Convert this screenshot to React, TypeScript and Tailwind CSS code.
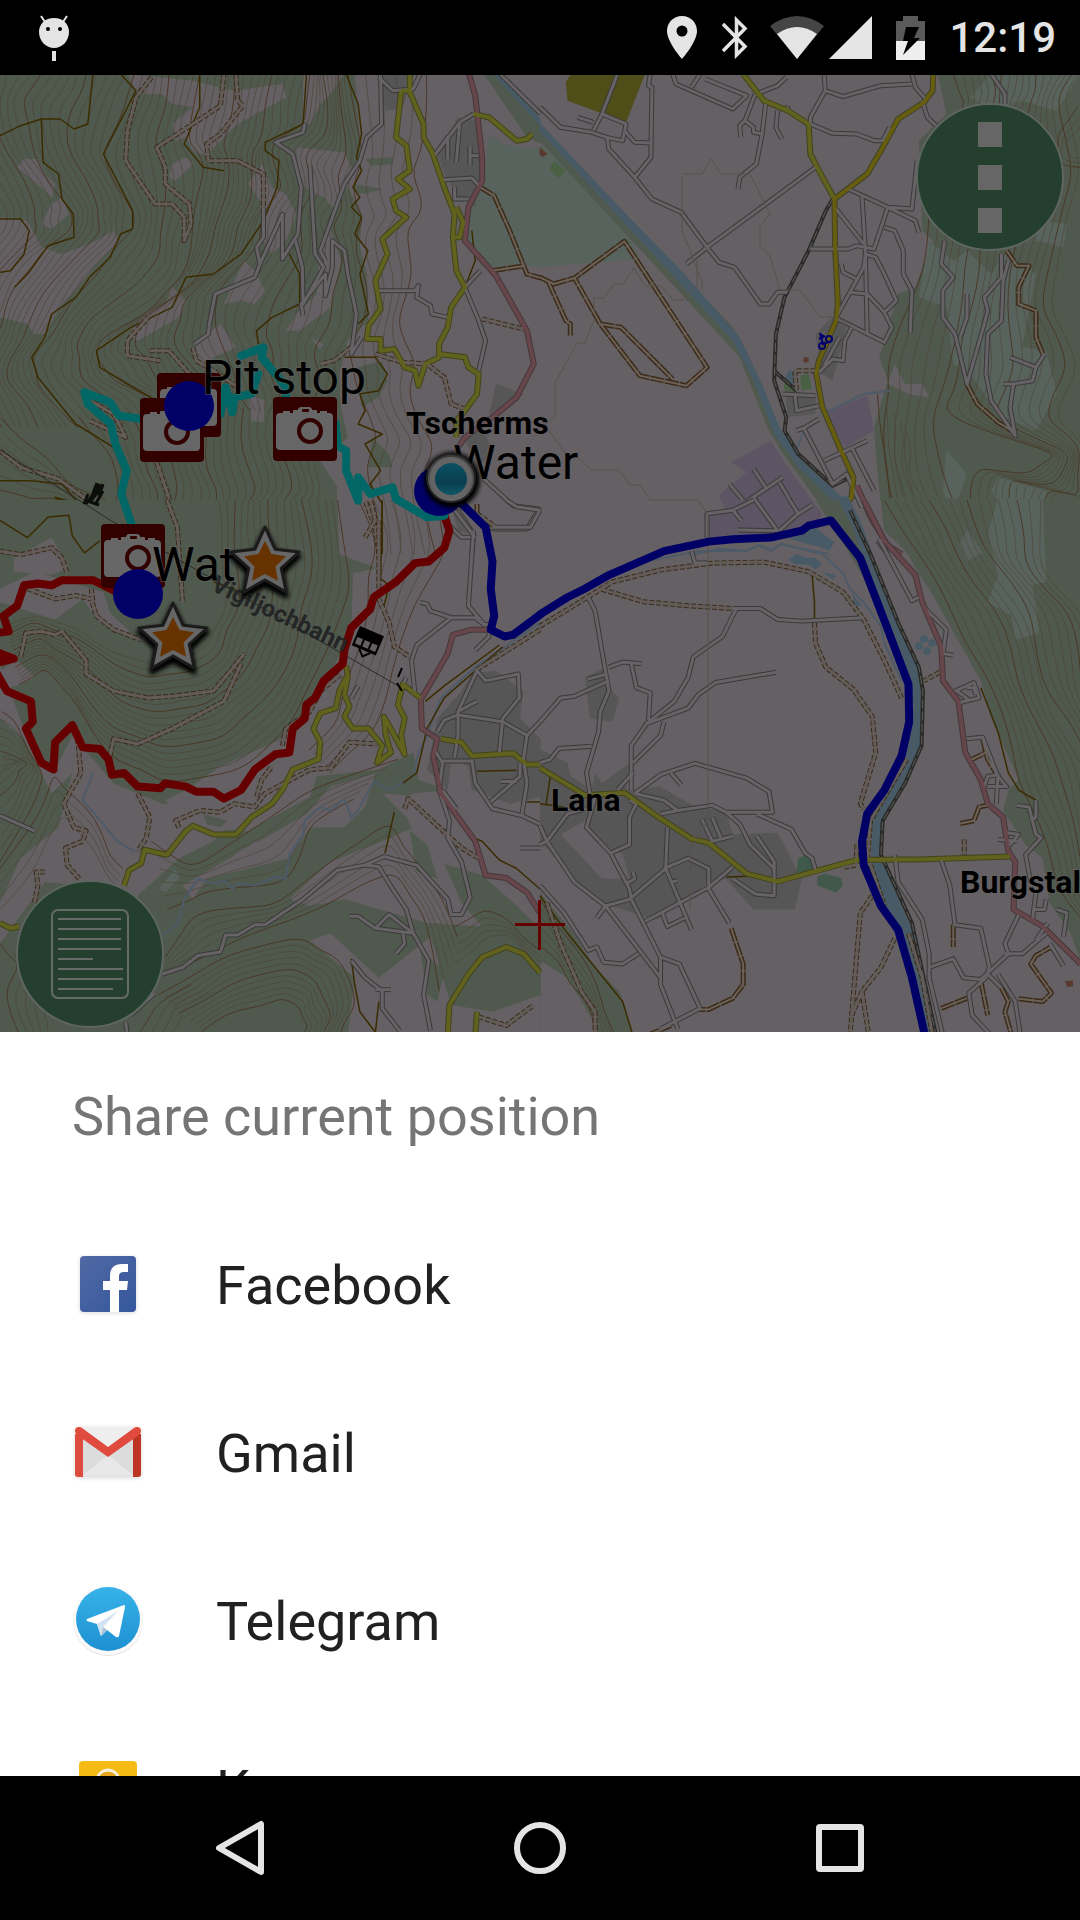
import React from "react";

type Kind = "minor" | "yellow" | "gold" | "red" | "track" | "path" | "water" | "rail" | "brown";

type Sheet = {
  transform: string;
  areas: [string, string][];
  contours: [string, string, number][];
  lines: Partial<Record<Kind, string[]>>;
};

const LAND = "#656064";
const WOOD = "#50594d";
const HEATH = "#59635d";
const TOWN = "#575656";
const TRADE = "#5d5464";
const LAKE = "#495a67";

const casing: Record<Kind, [string, number, string?]> = {
  minor: ["#393a39", 5],
  yellow: ["#42431c", 6],
  gold: ["#40402a", 6],
  red: ["#45373a", 6],
  track: ["#3b2c19", 5, "5 2"],
  path: ["#3b2c00", 1.5],
  water: ["#4d5a68", 2],
  rail: ["#2a2b28", 4],
  brown: ["#3d2b17", 5, "14 1"],
};
const core: Partial<Record<Kind, [string, number, string?]>> = {
  minor: ["#666266", 3],
  yellow: ["#62621f", 4],
  gold: ["#665e0e", 4],
  red: ["#66464b", 4],
  track: ["#625b58", 3],
  rail: ["#5d5c5a", 1, "9 3"],
  brown: ["#6a6159", 2],
};

const northWest: Sheet = {
  transform: "translate(0 74) scale(0.34439 0.33333)",
  areas: [
    [WOOD, "0,0 1030,0 1048,240 1005,330 1050,420 1045,520 1065,600 1070,740 1010,800 985,900 990,1000 1010,1090 930,1160 980,1240 975,1330 970,1445 0,1445"],
    [LAND, "0,430 80,440 120,520 180,540 260,510 330,470 345,500 280,570 240,620 180,690 130,780 100,780 80,750 0,730"],
    [LAND, "50,280 70,255 110,255 130,300 160,330 150,370 125,345"],
    [LAND, "120,450 150,390 180,370 200,420 150,465"],
    [LAND, "370,0 560,20 680,50 820,30 832,70 760,110 690,150 640,200 600,245 560,230 540,190 510,200 500,150 560,100 500,90 470,60 400,60"],
    [LAND, "490,310 500,270 540,250 560,270 510,320"],
    [LAND, "720,330 760,270 790,340 830,360 860,420 830,500 790,540 765,500 770,400"],
    [LAND, "860,220 1000,235 1030,300 985,380 975,410 940,370 900,350 870,330"],
    [LAND, "880,0 1000,0 960,60 930,90 900,150 880,140"],
    [LAND, "650,690 690,600 710,560 740,590 770,650 740,690 700,680"],
    [LAND, "375,780 430,710 480,690 500,640 540,680 520,730 400,800"],
    [LAND, "570,810 640,750 685,820 620,850 590,890 570,850"],
    [LAND, "930,510 960,470 990,560 960,700 870,770 830,770 860,720 920,660"],
    [LAND, "720,960 770,980 765,1045 730,1040"],
    [LAND, "130,1400 160,1320 190,1400 170,1440"],
    [LAND, "900,790 940,810 930,825"],
    [WOOD, "1060,255 1140,250 1140,270 1080,275"],
    [WOOD, "1030,330 1115,345 1060,360 1030,355"],
    [WOOD, "1040,880 1110,860 1125,920 1100,970 1050,1000"],
    [WOOD, "1080,1090 1130,1140 1140,1180 1070,1180"],
    [HEATH, "1420,180 1460,210 1510,220 1570,220 1570,580 1525,575 1400,580 1355,500 1370,390 1405,310"],
    [WOOD, "1405,0 1440,0 1570,150 1570,210 1530,190"],
    [LAKE, "1432,0 1452,0 1570,135 1570,158"],
    [TOWN, "1100,0 1200,0 1170,100 1120,110"],
    [TOWN, "1330,130 1395,140 1400,250 1380,400 1330,370 1290,300 1270,240"],
    [TOWN, "1440,930 1520,960 1480,1000 1420,1020"],
    [TOWN, "1340,1080 1400,1060 1430,1130 1390,1180"],
  ],
  contours: [
    ["-180,0 -140,80 -80,240 -10,400 -10,470 -60,540 -140,640 -180,760 -220,850", "120,0 60,80 100,240 200,400 200,470 120,540 40,640 0,760 -40,850", 9],
    ["120,0 60,80 100,240 200,400 200,470 120,540 40,640 0,760 -40,850 -50,930 0,1060", "390,0 350,120 300,240 380,400 380,470 320,550 220,670 150,780 95,850 110,930 220,1060", 10],
    ["390,0 350,120 300,240 380,400 380,470 320,550 220,670 150,780 95,850 110,930 220,1060", "580,0 540,200 600,280 560,450 530,600 450,700 300,790 275,850 330,920 420,960 470,1040", 9],
    ["580,0 540,200 600,280 560,450 530,600 450,700 300,790 275,850 330,920 420,960 470,1040", "900,0 880,150 790,210 820,330 770,400 760,500 640,640 620,760 660,850 690,930 720,1010", 15],
    ["900,0 880,150 790,210 820,330 770,400 760,500 640,640 620,760 660,850 690,930 720,1010", "1010,0 1050,240 1030,330 1050,420 1030,480 1060,600 1060,740 1010,830 1000,900 990,960 950,1010", 13],
    ["1010,0 1050,240 1030,330 1050,420 1030,480 1060,600 1060,740 1010,830 1040,950 1100,1100 1060,1200 1110,1440", "1290,0 1250,240 1240,330 1260,420 1210,480 1220,600 1180,740 1240,860 1210,950 1290,1100 1260,1200 1290,1440", 6],
    ["230,1030 310,1130 350,1250 330,1330 400,1440", "470,1000 480,1130 520,1250 500,1330 540,1440", 8],
    ["470,1000 480,1130 520,1250 500,1330 540,1440", "950,1000 930,1130 960,1250 900,1330 890,1440", 20],
    ["0,1030 90,1120 180,1200 240,1250 330,1300", "0,1420 90,1400 160,1330 250,1380 290,1440", 9],
  ],
  lines: {
    path: [
      "270,0 255,150 215,165 175,135 120,135 60,155 0,185",
      "120,135 125,265 170,300 180,375 213,420 215,490 140,515 80,600 42,640",
      "0,435 60,435 85,470 70,540 30,590 0,595",
      "350,0 395,50 300,240 340,320 385,410 385,465 350,480 320,550 260,610 220,670 150,720 130,790 92,850 110,910 220,1050 330,1120",
      "580,0 580,100 535,210 590,280 650,290",
      "890,0 880,150 800,190 770,205 770,230 810,260 805,340 765,440 700,540 620,600 540,610 500,700 380,760 280,830 290,880 370,930 470,990",
      "840,540 870,600 870,690 790,730 745,770 750,810",
      "1005,0 1040,90 1050,180 1035,250 1050,290 1025,340 1045,370 1020,400 1050,430 1030,480 1068,530 1045,600 1070,720 1040,750",
      "1000,850 1090,850 1125,900 1100,950 1045,960 1060,1010 1040,1050 1110,1080 1060,1110 1105,1190 1075,1230 1110,1290 1110,1440",
      "0,1220 90,1220 180,1230 230,1290 160,1270 220,1310 120,1330 40,1370 0,1380",
      "1370,470 1380,560 1350,640",
    ],
    track: [
      "440,10 395,70 370,170 365,260 450,390 500,390 535,430 535,500 555,450 550,390 480,330 480,280 455,220 545,160 640,95 650,0",
      "685,0 690,80 705,95 640,180 600,210 605,260 690,260 765,300 765,400",
      "465,860 370,845 370,800 430,730",
      "435,830 490,830 550,900 620,930",
      "0,1130 60,1180 170,1215 270,1290 330,1340",
      "270,985 330,1020 365,1090 260,1040",
      "455,1165 490,1270 515,1440",
      "560,820 570,860 620,890 690,940",
      "1090,840 1170,865 1240,870 1290,910 1310,990 1350,1005",
      "1400,735 1520,765",
      "1020,820 970,860 930,870",
      "1100,1440 1090,1360 1060,1280",
    ],
    brown: ["1395,340 1435,365 1480,470 1530,600 1570,612", "1430,590 1525,575", "1385,1290 1385,1330 1400,1345 1430,1365"],
    minor: [
      "765,400 765,490 745,520 755,570 740,610 625,660 608,750 605,780 565,810",
      "755,570 820,420 820,555 865,480 875,340 850,240 800,205 880,175 885,150",
      "900,275 915,540 940,580 880,690 878,580 858,500",
      "1105,0 1108,150 1065,190 1045,260 1000,330 930,530 945,560",
      "880,725 875,690 945,600 945,665 965,580 965,500 1000,530 1010,600 1035,720 1020,840 1050,790",
      "1100,10 1140,50 1200,45 1220,0",
      "1375,120 1335,145 1265,240 1300,190 1300,255",
      "1325,265 1335,145",
      "1365,215 1365,275",
      "1365,245 1390,245",
      "1285,318 1370,312 1395,340",
      "1320,340 1320,375 1360,375",
      "1100,650 1205,650 1215,635 1210,670 1250,695 1255,720 1300,730",
      "1395,590 1350,640 1390,740 1410,800 1390,890",
      "1405,1215 1490,1295 1565,1305 1530,1365 1430,1365",
      "1330,1310 1375,1380 1370,1440",
      "1290,1340 1340,1390 1375,1390",
      "1452,0 1570,120",
    ],
    yellow: [
      "1165,50 1150,190 1180,215 1190,290 1155,315 1190,345 1140,375 1150,410 1180,430 1110,495 1125,540 1090,620 1105,705 1070,755 1065,795 1105,795 1105,830 1145,825 1175,880 1205,890 1215,935 1235,870 1275,850 1275,810 1300,760 1310,700 1350,640 1325,590 1315,490 1320,420 1290,340 1255,235 1230,190 1230,150 1190,55 1190,0",
      "1165,50 1190,50",
      "1325,400 1345,445 1335,490 1320,490",
      "1275,840 1350,850 1360,880 1390,900 1385,960 1350,1010 1325,1040 1325,1090",
      "1375,120 1420,130 1500,200 1530,195 1545,180",
    ],
    red: ["1362,0 1380,65 1400,250 1400,320 1360,400 1350,500 1440,605 1530,770 1550,870 1500,970 1430,1030 1350,1090 1330,1120"],
  },
};

const northEast: Sheet = {
  transform: "translate(540 74) scale(0.34439 0.33333)",
  areas: [
    ["#4f4d18", "90,0 305,0 250,145 80,80 75,25"],
    [HEATH, "-2,215 40,225 265,500 290,555 0,580"],
    [WOOD, "-2,165 560,760 640,920 700,1080 850,1250 940,1440 900,1440 840,1330 700,1130 660,1060 580,850 500,760 -2,200"],
    [LAKE, "-2,145 250,420 420,600 580,790 640,920 700,1070 780,1180 900,1290 965,1440 940,1440 880,1310 750,1180 680,1080 620,920 560,800 -2,170"],
    [TRADE, "555,1165 670,1100 720,1180 820,1320 790,1350 700,1375 490,1395 490,1320 550,1310 518,1265 600,1195"],
    [TRADE, "830,1015 950,965 970,1070 885,1120"],
    [WOOD, "1155,0 1570,0 1570,1440 1070,1440 1000,1370 980,1200 970,1060 1010,920 985,850 1040,660 1090,640 1140,500 1110,470 1100,200 1180,120"],
    [LAND, "1030,870 1060,930 1110,930 1130,970 1070,960 1010,930"],
    [HEATH, "1130,500 1200,560 1240,530 1310,600 1350,540 1440,600 1400,820 1470,830 1500,960 1440,1070 1330,1020 1250,900 1200,870 1180,700 1100,670"],
    [HEATH, "1250,70 1310,0 1570,0 1500,110 1400,80 1310,110"],
    [HEATH, "1180,1130 1240,1200 1200,1315 1170,1250"],
    [HEATH, "1330,1210 1470,1250 1450,1440 1380,1380 1310,1250"],
    [HEATH, "1440,440 1530,450 1520,520 1440,500"],
    [TOWN, "800,780 850,730 890,760 850,920 820,900"],
    [TOWN, "710,940 800,970 800,1020 720,1030"],
    ["#496043", "755,905 780,900 790,945 760,950"],
    ["#496043", "710,925 745,940 740,955 708,945"],
    [LAKE, "725,885 745,905 735,935 710,915"],
    ["#593a2f", "765,850 780,850 780,865 765,865"],
    ["#593a2f", "0,220 22,240 8,250 -2,240"],
    ["#496043", "40,260 75,290 55,312 28,285"],
    [LAKE, "700,1385 790,1365 855,1405 840,1430 790,1410"],
  ],
  contours: [
    ["1200,0 1230,90 1180,200 1130,400 1100,620 1010,880 1000,1040 1010,1250 1070,1440", "1340,0 1330,90 1300,300 1280,500 1250,700 1220,880 1170,1040 1220,1250 1280,1440", 6],
    ["1340,0 1330,90 1300,300 1280,500 1250,700 1220,880 1170,1020 1500,1140 1420,1200 1260,1180 1250,1440", "1590,0 1540,90 1590,300 1540,500 1500,700 1590,880 1530,1040 1590,1130 1590,1280 1510,1260 1470,1440", 12],
    ["980,960 990,1100 1020,1300 1080,1440", "1090,1100 1090,1200 1140,1280 1150,1440", 5],
    ["1560,100 1500,180 1500,260 1570,280", "1570,180 1550,200 1550,230 1570,240", 3],
  ],
  lines: {
    path: [],
    water: ["740,1140 770,1060", "830,1015 940,960 1015,950", "450,1440 520,1425 600,1430 635,1415 670,1430 700,1410 760,1425 840,1440"],
    rail: ["850,375 830,410 780,530 710,670 685,780 680,920 715,1030 710,1070 750,1140 850,1235 890,1215", "680,890 745,950"],
    brown: [
      "0,610 40,630 100,612 245,502 485,880 425,935 290,905 175,750 100,612",
      "175,750 235,760 385,915",
      "25,625 75,740 88,750 88,785",
      "1355,530 1385,575 1420,575 1390,640 1390,690 1440,710 1440,790 1460,840",
      "1240,930 1270,990 1330,1045 1370,1070",
    ],
    track: ["800,890 740,890 745,950", "720,95 715,110"],
    minor: [
      "320,0 315,35 325,40 322,250 275,310 200,225 195,190 150,175 60,160 0,100",
      "225,0 180,120 155,170",
      "110,130 155,145",
      "180,120 250,150 240,200 190,190",
      "245,170 275,205 320,207",
      "275,310 325,375 410,415 485,520 520,565 565,580 640,690 665,690 690,655 718,655",
      "425,570 485,520 800,280",
      "385,0 395,30 560,105 600,65 480,15",
      "440,40 465,0 M",
      "625,60 595,140 580,155 583,190",
      "595,140 620,160 620,175 645,180",
      "655,90 645,180 628,270 580,310 575,345",
      "690,110 685,160 702,195",
      "640,55 690,35 715,10",
      "825,0 828,50 785,130 785,150 850,178 920,180 970,200 995,200 1015,160",
      "828,50 880,68 990,35 1080,30",
      "1080,0 1090,40 1120,75",
      "1110,80 1125,130 1150,155",
      "895,345 1010,400 1080,405 1095,260",
      "935,365 945,535 950,780",
      "1010,400 970,525 920,515 895,525 785,525",
      "860,405 940,510",
      "945,540 940,580 900,655 865,720",
      "945,540 975,550 1000,600 1035,680 1000,715 950,660 900,655",
      "1000,715 1022,760 1000,805 865,735",
      "1000,460 1030,470 1055,530 1055,600 1080,650 1075,775",
      "1010,400 1090,440 1100,475",
      "875,570 880,595 920,615",
      "905,760 885,800 880,860 850,855 810,895",
      "870,790 825,875",
      "740,960 745,1010 810,995",
      "705,960 800,965",
      "765,1060 850,1230 890,1200 935,1300",
      "745,1070 770,1060 810,1035",
      "825,1160 950,1100",
      "905,1120 970,1250",
      "490,1390 485,1325 560,1310 705,1210",
      "550,1230 590,1280",
      "560,1310 585,1335",
      "620,1185 655,1240",
      "620,1270 690,1370",
      "695,1225 750,1320 695,1370 575,1368",
      "750,1320 790,1300",
      "705,1370 750,1330 805,1325 790,1345",
      "1175,500 1165,570 1200,610 1170,650 1170,730 1205,780 1240,930 1290,750 1300,710 1290,670 1340,610 1340,540",
      "1240,660 1240,730 1220,790",
      "1360,560 1345,620 1340,740 1300,780 1295,900 1310,980 1380,1085 1365,1000 1375,930 1345,930",
      "1375,930 1430,920 1440,880 1365,850",
      "1440,880 1465,840",
      "980,1400 1010,1440",
      "1310,0 1350,60 1350,90",
    ],
    yellow: ["590,0 650,80 720,110 780,150 785,240 810,290 855,375"],
    gold: ["1142,0 1140,50 1115,85 1040,135 990,230 950,300 855,375 857,520 865,690 860,740 810,860 802,900 820,1000 870,1120 910,1210 905,1270 850,1335"],
    red: ["920,1235 960,1330 1010,1415 1050,1440"],
  },
};

const southWest: Sheet = {
  transform: "translate(0 500) scale(0.34439 0.3412)",
  areas: [
    [WOOD, "0,0 980,0 985,160 1095,200 1025,215 1020,400 960,500 900,600 820,700 640,780 540,850 480,880 560,960 720,970 900,870 920,810 1100,790 1200,740 1215,820 1300,850 1200,860 1160,880 1260,980 1200,1040 1400,1100 1490,1180 1570,1260 1570,1570 0,1570"],
    [LAND, "0,480 40,590 90,730 160,790 210,690 330,830 470,890 600,900 720,960 560,980 520,1050 400,1160 420,1260 330,1180 250,1130 130,1120 0,1300 0,1180 60,1050 170,960 210,800 150,860 70,700 0,640"],
    [LAND, "0,260 100,210 300,270 320,330 410,420 290,360 240,290 160,350 0,300"],
    [LAND, "40,170 150,110 200,200 150,220 40,210"],
    [LAND, "0,500 50,470 100,520 60,540 0,560"],
    [LAND, "450,960 560,900 720,840 830,700 880,720 830,830 730,900 620,1000 500,1060 440,1030"],
    [LAND, "680,1040 745,1000 740,1050 690,1065"],
    [LAND, "890,920 960,840 1090,800 1060,900 1000,960 900,960 840,1050 600,1110 560,1170 530,1130"],
    [LAND, "840,1170 960,1060 1110,1000 1200,960 1270,1020 1340,1180 1400,1250 1240,1240 1000,1170 900,1190"],
    [LAND, "900,1290 960,1270 1100,1400 1250,1280 1310,1480 1430,1500 1570,1450 1570,1570 1010,1570 1030,1400"],
    [LAND, "1110,860 1240,870 1400,1100 1230,1030 1180,930"],
    [LAND, "1210,770 1570,800 1570,1200 1420,1100 1300,880"],
    [WOOD, "1190,970 1240,1010 1270,1110 1210,1090"],
    [WOOD, "1220,1320 1290,1380 1270,1470 1240,1450"],
    [WOOD, "590,920 660,940 640,960 600,950"],
    [TOWN, "1270,640 1340,560 1370,510 1440,500 1520,560 1510,640 1570,700 1570,870 1480,890 1370,850 1360,780 1310,760 1300,850 1240,790"],
    [TOWN, "1310,20 1340,40 1370,100 1330,90"],
    [HEATH, "460,1140 510,1080 520,1110 480,1150"],
  ],
  contours: [
    ["980,0 1015,250 950,450 850,650 700,790 480,830 330,760 220,600 130,490 60,540", "620,0 620,150 640,300 600,400 520,450 430,460 330,430 220,360 100,330 20,360", 18],
    ["1270,0 1290,150 1210,300 1140,500 1080,680 960,800", "1000,0 1050,150 1040,300 1000,500 960,640 880,720", 6],
    ["0,1060 90,900 130,800 60,680 0,620", "0,720 20,730 40,760 20,800 0,830", 9],
    ["0,1080 110,920 160,800 230,880 300,1000 360,1080", "0,1240 130,1080 190,960 240,1020 300,1090 330,1150", 4],
    ["440,1000 560,1080 760,950 900,850 1150,760", "500,1240 600,1160 840,1160 900,980 1000,900 1200,860", 6],
    ["480,1340 560,1210 800,1190 960,1060 1130,940 1230,1080 1330,1280", "480,1400 640,1340 850,1240 1040,1160 1150,1120 1230,1250 1270,1470", 6],
    ["460,1450 640,1340 880,1280 980,1340 1030,1480 990,1570", "600,1570 700,1510 800,1480 860,1500 880,1540 860,1570", 11],
    ["0,1300 50,1360 20,1440 60,1570", "170,1430 160,1480 150,1520 160,1570", 5],
    ["1320,1250 1400,1200 1490,1240 1570,1320", "1330,1380 1400,1310 1480,1280 1570,1420", 5],
    ["400,1570 450,1480 560,1420", "520,1570 560,1500 640,1450", 4],
  ],
  lines: {
    water: [
      "470,1275 515,1245 535,1170 575,1110 620,1125 650,1115 675,1140 690,1125 740,1130 800,1105 830,1110 840,1040 880,980 885,940 930,900 960,910 1000,875 1020,930 1040,910 1085,825 1130,850 1200,810 1215,740 1240,690 1280,580 1380,490 1568,360",
      "270,800 240,880 300,950 340,1000 390,1030",
    ],
    path: [
      "0,60 80,110 140,50 200,45 210,105 245,155 290,120",
      "1110,0 1105,230 1130,250 1115,310",
      "1450,425 1290,545 1235,590",
      "1460,430 1290,580 1240,670 1210,800 1170,830",
      "1385,795 1500,792",
      "1530,885 1568,885",
      "1145,915 1118,1035",
      "1375,990 1400,1000 1450,1055 1500,1080 1568,1140",
      "1020,1345 1030,1420 1045,1500 1090,1560 1100,1470",
      "620,240 700,270",
    ],
    track: [
      "485,0 515,80 530,300",
      "0,150 60,160 150,140 180,170 195,215",
      "80,260 160,290 220,280 265,290 280,340 330,380 410,410",
      "60,460 75,390 120,385 160,395 180,385 250,470 250,510 330,560 430,580 500,575 620,560 670,500 710,450",
      "265,260 270,300",
      "700,480 650,590 500,670 400,715 330,700 315,770",
      "225,700 235,800 185,890 215,960 250,970 240,1000 190,1020 195,1070 230,1110",
      "400,860 435,930 425,990 400,1030",
      "130,1090 105,1090 110,1130 100,1180",
      "520,960 510,940 580,910 640,915 680,890 740,900 770,860 900,790 960,785 1015,710 1095,715",
      "745,870 760,820 790,780",
      "820,720 830,670 900,620 930,560 990,510",
      "1060,110 1090,60 1075,0",
      "1100,60 1100,290 1130,360 1145,430 1190,460",
      "1568,380 1380,500",
      "1175,905 1185,875 1340,1020 1390,1050",
      "1390,1515 1470,1540 1550,1480",
      "1385,40 1440,80",
    ],
    minor: [
      "1220,300 1240,305 1250,325 1310,345 1380,345 1405,365 1430,365",
      "1380,440 1420,400 1420,370",
      "1310,345 1210,425 1195,470 1205,570",
      "1375,90 1360,310 1410,370",
      "1320,30 1380,110",
      "1430,80 1540,80 1568,30",
      "1470,0 1500,20 1568,30",
      "470,1390 530,1370 575,1335 640,1325 655,1275 690,1275 740,1245 770,1245 880,1170 980,1085 1060,1070 1115,1045 1210,1070 1300,1170 1310,1215",
      "1060,1070 1100,1075 1140,1140 1180,1200 1200,1270 1245,1350 1230,1450 1250,1555",
      "1015,1220 1040,1220 1090,1255 1130,1215 1200,1270 1090,1255",
      "1150,1330 1175,1300 1170,1270",
      "1260,730 1285,770 1275,850 1305,940 1300,990 1340,1060 1365,1165 1340,1215 1310,1215",
      "1285,850 1325,905",
      "1385,500 1410,530 1505,510 1508,580 1460,640 1450,740",
      "1385,500 1330,620 1330,690 1320,755",
      "1270,680 1290,645 1330,630 1460,650 1530,690 1568,650",
      "1330,620 1385,590",
      "1530,690 1520,760 1530,830 1515,925",
      "1370,760 1380,830 1430,905 1515,925 1568,950",
      "1285,765 1370,765",
      "1425,885 1510,810 1510,770",
      "1455,825 1500,825",
      "1510,1020 1568,1020",
      "1020,1350 1060,1400 1110,1440 1110,1490 1160,1555",
      "1090,1435 1135,1435",
      "0,925 100,970",
      "380,1510 450,1445",
      "370,1570 365,1530",
      "1040,545 1020,580",
      "1170,540 1180,520",
    ],
    yellow: [
      "1005,485 1010,520 1000,570 1015,605 1000,635 1025,670 1070,670 1110,720 1095,770 1135,740 1120,690 1115,635 1175,745 1165,690 1175,640 1155,600 1170,540 1220,580",
      "1005,520 985,560 975,610 930,625 910,670 930,710 925,760 850,790 820,850 790,890 730,930 685,980 620,980 560,955 540,970 485,1040 420,1025 410,1065 375,1085 360,1130",
      "0,1240 30,1255 55,1250",
      "1280,700 1340,710 1370,750 1490,742 1530,775 1568,775",
      "1300,1570 1305,1480 1360,1390 1400,1340 1470,1310 1520,1330 1568,1385",
      "1380,1570 1385,1500",
    ],
    red: ["1440,380 1370,380 1315,395 1300,450 1260,520 1222,585 1225,670 1270,700 1258,750 1280,860 1380,1000 1410,1100 1470,1108 1530,1150 1568,1210"],
  },
};

const southEast: Sheet = {
  transform: "translate(540 500) scale(0.34439 0.3412)",
  areas: [
    [TRADE, "525,0 780,0 815,50 780,75 700,95 490,115 490,40 540,30"],
    [WOOD, "800,0 870,0 960,190 1000,330 900,160"],
    [LAKE, "860,-10 895,-10 930,60 1000,250 1085,450 1112,560 1105,720 1060,830 990,940 990,1050 1080,1260 1155,1570 1120,1570 1040,1300 960,1080 965,930 1060,780 1085,600 1050,450 980,280 900,60"],
    [WOOD, "985,-5 1570,-5 1570,1350 1540,1270 1480,1180 1460,1050 1410,1010 1345,910 1360,850 1390,820 1310,640 1280,530 1230,440 1130,260 1090,200"],
    [HEATH, "1330,-5 1460,-5 1470,240 1430,250 1450,390 1380,410 1370,340 1300,300 1330,220 1300,100"],
    [HEATH, "1240,85 1285,155 1240,180 1218,130"],
    [LAKE, "690,105 800,80 855,125 840,145 780,130"],
    [LAKE, "720,175 745,158 775,170 800,170 820,190 800,203 780,190 740,188"],
    [LAKE, "820,212 860,220 850,232"],
    [LAKE, "905,275 935,310 915,310"],
    [TOWN, "0,730 80,770 90,810 150,850 160,800 180,830 260,770 250,850 350,840 450,900 540,910 560,980 690,975 760,1110 740,1200 620,1200 540,1110 490,1120 340,1230 300,1220 150,1170 90,1100 0,1000"],
    [LAND, "160,1000 240,1040 260,1110 180,1110 60,980 130,940"],
    [TOWN, "130,520 190,490 210,560 230,580 210,650 145,640"],
    ["#3f5a4a", "750,1050 780,1038 800,1090 745,1092"],
    ["#42584b", "805,1105 825,1095 875,1108 880,1130 860,1150 805,1130"],
    [WOOD, "0,1150 90,1260 160,1370 230,1440 270,1570 170,1570 150,1520 80,1400 0,1350"],
    ["#593a2f", "1525,1410 1548,1408 1548,1425 1530,1428"],
  ],
  contours: [
    ["1000,0 1090,150 1200,330 1290,500 1370,740 1430,900 1500,1120 1580,1240", "1240,0 1290,150 1430,330 1470,560 1580,740 1620,900 1640,1050 1660,1200", 9],
    ["1240,0 1290,150 1430,330 1470,560 1580,740", "1480,0 1470,200 1600,330 1640,560 1700,740", 8],
    ["0,1170 80,1290 170,1420 220,1570", "0,1330 60,1390 120,1470 150,1570", 6],
  ],
  lines: {
    water: ["220,210 330,175 460,150 600,148 635,132 675,148 700,128 820,158 880,215 900,260 940,300 990,370 1000,420 1050,530"],
    path: [
      "790,220 797,300 797,350",
      "30,810 18,890",
      "0,890 70,900",
      "540,1105 610,1103",
      "1280,550 1330,680 1360,800 1390,850 1440,880",
      "0,1160 80,1270 160,1370 240,1470 270,1570",
      "990,1010 995,1050",
    ],
    track: [
      "0,370 130,290 210,240 350,205 500,185 650,182 780,210 880,270 940,350 1000,470 1050,580",
      "180,262 300,298 430,310 560,318",
      "797,360 800,420 830,490 910,555 965,635 975,740 930,890 940,905",
      "1065,760 1000,870 960,940 950,1060",
      "920,1010 918,1070 880,1077",
      "965,1160 930,1210 900,1570",
      "1030,1285 990,1370 935,1440 955,1570",
      "935,1440 905,1510",
      "1160,505 1115,530",
      "1232,995 1232,1040",
      "1070,1270 1110,1400 1140,1570",
      "960,1070 1000,1190",
      "20,1180 60,1300 120,1440 160,1500 160,1570",
    ],
    brown: [
      "555,1255 590,1360 590,1420 560,1460 490,1493 460,1493",
      "1220,948 1260,940 1275,900 1300,895",
      "1245,765 1295,740",
      "1285,700 1300,760 1330,810",
      "1200,1245 1200,1310",
      "1280,1410 1300,1510",
      "1165,1490 1240,1460",
      "1390,1462 1460,1470 1485,1445 1425,1360 1440,1335 1485,1310",
      "1340,1430 1360,1470 1350,1500 1370,1570",
      "310,1570 380,1540",
    ],
    rail: ["900,30 960,160 1040,360 1100,490 1112,560 1108,720 1060,830 995,940 990,1040 1080,1240 1150,1570"],
    minor: [
      "485,110 485,40 560,30 620,0",
      "560,30 585,60",
      "625,0 690,90 575,88",
      "725,0 750,40 695,90",
      "750,40 790,15",
      "440,150 450,185 490,185",
      "140,285 160,325 200,560 175,620 170,680 135,800 145,860",
      "0,650 60,580 100,575 200,530",
      "140,525 195,510",
      "200,490 240,475 295,480",
      "265,480 280,550 320,565 315,645",
      "0,770 30,760 55,728 150,722",
      "560,318 640,318 690,350 760,355 940,345",
      "570,318 530,400 445,460 430,520 390,590 310,655 265,720 265,850",
      "310,655 430,610 460,570 510,535 685,505",
      "360,650 350,690 270,770",
      "225,850 270,800",
      "275,860 350,805 450,772 600,815 665,855 675,915 540,915 500,895 400,910 350,920",
      "380,800 410,835",
      "275,860 360,880 400,910",
      "540,915 580,950 610,1010 680,1080 680,1160 625,1155 560,1110",
      "630,920 730,965 770,1035 790,1050 800,1085",
      "630,985 680,1060 680,1080",
      "470,935 500,1000 560,985",
      "500,930 525,990",
      "370,960 365,1080 260,1170 190,1190 165,1225",
      "260,880 280,890 260,930 260,1010 205,1035",
      "160,870 135,960 205,1035 260,1140 265,1170 350,1340 350,1420 400,1550",
      "0,955 20,1000 100,1120 190,1190 350,1400",
      "0,1010 20,1000 80,920 150,900",
      "360,1080 430,1050 490,1080 490,1140 550,1240",
      "365,1080 440,1260",
      "400,1115 380,1120",
      "305,1235 490,1135 560,1075",
      "355,1210 370,1250 420,1225",
      "270,1090 275,1110 250,1125",
      "350,1340 405,1360 465,1490 350,1550",
      "0,1130 70,1210 140,1320 165,1310 185,1355 240,1360 285,1330",
      "985,115 1080,295 1100,285",
      "1120,320 1180,380 1170,450 1200,455",
      "1205,560 1260,535 1275,580 1215,595 1245,585 1210,560",
      "1240,550 1260,550 1265,570",
      "1240,700 1285,695 1330,810 1355,840 1300,840",
      "1290,840 1300,810 1330,805 1325,890",
      "1355,975 1390,980 1360,1015",
      "1330,995 1385,1000",
      "1385,895 1420,900 1440,980 1455,990 1410,1040 1425,1120",
      "1440,880 1440,930 1425,940",
      "1165,1055 1190,1130 1205,1245 1280,1255 1305,1370 1295,1400 1245,1445 1255,1510 1310,1570",
      "1030,1040 1040,1120 1110,1230 1130,1330 1130,1400 1170,1570",
      "1130,1370 1200,1345 1230,1400 1280,1405 1360,1330 1350,1300 1390,1215",
      "1350,1330 1400,1330 1470,1270",
      "1330,1390 1380,1470 1395,1570",
      "1300,1390 1340,1430",
      "1440,1150 1430,1230",
      "1430,1200 1465,1200 1470,1170",
      "1500,1200 1530,1210 1520,1280",
      "1440,1290 1475,1240",
      "1480,1300 1520,1365",
    ],
    red: ["940,0 1000,120 1090,220 1110,300 1165,430 1170,530 1215,590 1235,740 1280,820 1300,890 1345,930 1360,1030 1380,1060 1375,1200 1460,1250 1570,1360"],
    yellow: ["0,785 130,865 245,858 330,920 440,993 490,1005 600,1095 690,1118 800,1088 920,1055 1120,1053 1365,1045"],
  },
};

const sheets = [northWest, northEast, southWest, southEast];

const parse = (s: string) =>
  s.split(" ").filter((p) => p.includes(",")).map((p) => p.split(",").map(Number));
const clean = (s: string) => s.split(" ").filter((p) => p.includes(",")).join(" ");

function curve(points: number[][]) {
  let d = `M${points[0][0]} ${points[0][1]}`;
  for (let i = 1; i < points.length - 1; i++) {
    const [x, y] = points[i];
    const [nx, ny] = points[i + 1];
    d += `Q${x} ${y} ${(x + nx) / 2} ${(y + ny) / 2}`;
  }
  const last = points[points.length - 1];
  return d + `L${last[0]} ${last[1]}`;
}

/** Contour lines, blended step by step from one guide line to the other. */
function Contours({ from, to, steps }: { from: string; to: string; steps: number }) {
  const a = parse(from);
  const b = parse(to);
  return (
    <>
      {Array.from({ length: steps }, (_, k) => {
        const t = k / steps;
        const pts: number[][] = [];
        for (let i = 0; i < a.length; i++) {
          const x = a[i][0] + (b[i][0] - a[i][0]) * t;
          const y = a[i][1] + (b[i][1] - a[i][1]) * t;
          pts.push([x + 5 * Math.sin(i * 2 + k), y]);
          if (i < a.length - 1) {
            const mx = x + (a[i + 1][0] + (b[i + 1][0] - a[i + 1][0]) * t - x) / 2;
            const my = y + (a[i + 1][1] + (b[i + 1][1] - a[i + 1][1]) * t - y) / 2;
            pts.push([mx + 12 * Math.sin(i * 2.7 + k * 0.4), my + 6 * Math.cos(i * 3 + k * 0.3)]);
          }
        }
        return (
          <path
            key={k}
            d={curve(pts)}
            stroke={k % 5 === 0 ? "#4a3422" : "#4b4334"}
            strokeWidth={1}
            opacity={k % 5 === 0 ? 0.9 : 0.6}
            vectorEffect="non-scaling-stroke"
          />
        );
      })}
    </>
  );
}

function Lines({ kind, items, style }: { kind: Kind; items: string[]; style: [string, number, string?] }) {
  return (
    <g stroke={style[0]} strokeWidth={style[1]} strokeDasharray={style[2]}>
      {items.map((p, i) => (
        <polyline key={kind + i} points={clean(p)} vectorEffect="non-scaling-stroke" />
      ))}
    </g>
  );
}

const order: Kind[] = ["water", "path", "track", "brown", "rail", "minor", "red", "yellow", "gold"];

function MapSheet({ sheet }: { sheet: Sheet }) {
  return (
    <g transform={sheet.transform}>
      {sheet.areas.map(([fill, pts], i) => (
        <polygon key={i} points={pts} fill={fill} />
      ))}
      <g fill="none" strokeLinejoin="round">
        {sheet.contours.map(([a, b, n], i) => (
          <Contours key={i} from={a} to={b} steps={n} />
        ))}
        {order.map((k) => sheet.lines[k] && <Lines key={k} kind={k} items={sheet.lines[k]!} style={casing[k]} />)}
        {order.map((k) =>
          sheet.lines[k] && core[k] ? <Lines key={k} kind={k} items={sheet.lines[k]!} style={core[k]!} /> : null
        )}
      </g>
    </g>
  );
}

function Route({ transform, color, points }: { transform: string; color: string; points: string[] }) {
  return (
    <g transform={transform} fill="none" stroke={color} strokeWidth={8} strokeLinejoin="round" strokeLinecap="round">
      {points.map((p, i) => (
        <polyline key={i} points={p} vectorEffect="non-scaling-stroke" />
      ))}
    </g>
  );
}

function CameraPin({ x, y }: { x: number; y: number }) {
  return (
    <g transform={`translate(${x} ${y})`}>
      <rect width="64" height="64" rx="4" fill="#330000" />
      <path d="M20 17v-3q0-1 1-1h4v-1q1-2 3-2h8q2 0 3 2v1h4q1 0 1 1v3zM10 17v-3h7v3zM47 17v-3h7v3z" fill="#666" />
      <rect x="3" y="16" width="57" height="37" rx="4" fill="#666" />
      <rect x="29" y="12" width="7" height="3" rx="1" fill="#330000" />
      <circle cx="37" cy="34" r="11" fill="none" stroke="#330000" strokeWidth="4" />
    </g>
  );
}

function star(cx: number, cy: number, outer: number, inner: number) {
  return Array.from({ length: 10 }, (_, i) => {
    const r = i % 2 ? inner : outer;
    const a = (Math.PI / 5) * i - Math.PI / 2;
    return `${(cx + r * Math.cos(a)).toFixed(1)},${(cy + r * Math.sin(a)).toFixed(1)}`;
  }).join(" ");
}

function StarPin({ x, y }: { x: number; y: number }) {
  return (
    <g transform={`translate(${x} ${y})`} strokeLinejoin="round">
      <polygon points={star(0, 5, 36, 18)} fill="#000" stroke="#000" strokeWidth="5" filter="url(#soft)" />
      <polygon points={star(0, 1, 36, 17)} fill="#666" stroke="#1b1b1b" strokeWidth="3" />
      <polygon points={star(0, 1, 22, 11)} fill="#663200" />
    </g>
  );
}

const label = "font-[Roboto,sans-serif] fill-black stroke-[#66666680] [paint-order:stroke]";

function MapView() {
  return (
    <svg
      className="absolute inset-0 h-full w-full"
      viewBox="0 75 1080 957"
      preserveAspectRatio="xMidYMid slice"
      role="img"
      aria-label="Trail map around Tscherms and Lana"
    >
      <defs>
        <filter id="soft" x="-30%" y="-30%" width="160%" height="160%">
          <feGaussianBlur stdDeviation="2" />
        </filter>
        <linearGradient id="ring" x1="0" y1="0" x2="0" y2="1">
          <stop offset="0" stopColor="#3c3c3c" />
          <stop offset="1" stopColor="#6a6a6a" />
        </linearGradient>
        <linearGradient id="core" x1="0" y1="0" x2="0" y2="1">
          <stop offset="0" stopColor="#0c5062" />
          <stop offset="0.6" stopColor="#083f50" />
          <stop offset="1" stopColor="#115666" />
        </linearGradient>
      </defs>
      <rect y="75" width="1080" height="957" fill={LAND} />
      {sheets.map((s) => (
        <MapSheet key={s.transform} sheet={s} />
      ))}
      <g fill="none" stroke="#585249" strokeWidth="1">
        <path d="M682 177V230L702 282V290M682 174h20l9-15l10 15h29l20 40l-10 12v20l10 10l10 34h20l20 27h17l20 14M594 310v-12h10l10-14h9l11-16l11 18h16l12 14h10l14-14V260M594 320l-9 23h-8l-22 40v32l-10 10l22 31h10l14 14h28l11 15h10l10 15h48l10 15V820l-18 30v60" />
      </g>
      <g fill={LAKE}>
        <circle cx="924" cy="639" r="4" />
        <circle cx="932" cy="643" r="4" />
        <circle cx="919" cy="646" r="4" />
        <circle cx="927" cy="651" r="4" />
      </g>
      <g fill="none" stroke="#000070" strokeWidth="2">
        <circle cx="829" cy="339" r="3" />
        <circle cx="822" cy="346" r="3" />
        <path d="M820 333l3 11l6-2M819 339l6-3M820 334l5 3" />
      </g>

      <path d="M0 450L110 520M110 520L400 687" stroke="#292a29" strokeWidth="1" />
      <path d="M397 683l5 8M402 668l-4 9" stroke="#000" strokeWidth="2" />
      <path d="M86 504l14-20M90 502l13-17M95 505l8-14M97 483l-4 10M103 484l-4 12M84 504l4-10M85 500l14 5" stroke="#0c0e0b" strokeWidth="3" />
      <g transform="translate(360 626) rotate(23)">
        <path d="M0 0h26v21H0z" fill="#000" />
        <path d="M2 11h6v7H2zM10 11h6v7h-6zM18 11h6v7h-6z" fill={LAND} />
        <path d="M8 21l6 6l6-6" fill="none" stroke="#000" strokeWidth="2" />
      </g>

      <Route transform={southWest.transform} color="#660000" points={[
        "1290,45 1305,90 1290,140 1245,180 1205,185 1150,240 1085,285 1075,320 1020,375 1000,440 995,480 940,530 915,580 890,600 885,640 850,670 840,740 800,745 740,790 700,850 650,875 620,855 570,855 540,840 480,830 465,845 400,840 360,800 325,805 315,760 290,730 240,725 210,660 160,710 155,790 120,770 75,670 95,650 90,590 20,560 -20,490",
        "-20,480 40,465 -10,445",
        "-10,390 25,385 10,340 50,310 70,250 110,245 150,250 180,235 230,235 270,235 330,265",
      ]} />
      <Route transform={northWest.transform} color="#006666" points={[
        "385,1360 352,1260 368,1190 335,1110 322,1050 255,990 245,955 320,985 345,1025 410,1035",
        "640,1020 655,940 675,1015 680,970 730,960 750,900",
        "700,845 765,820 760,850 800,900 830,940 830,980",
        "975,1050 980,1115 1005,1130 1005,1190 1040,1280 1040,1210 1075,1260 1140,1240 1150,1275 1240,1330 1290,1325",
      ]} />
      <Route transform={southWest.transform} color="#000066" points={["1340,10 1410,80 1430,180 1425,260 1435,340 1425,380 1465,400 1490,395 1570,335"]} />
      <Route transform={southEast.transform} color="#000066" points={["0,335 80,285 130,260 200,220 360,150 490,122 560,115 670,110 760,90 780,75 845,60 930,170 1010,380 1070,540 1072,650 1050,750 1000,850 950,920 935,1000 940,1070 990,1190 1040,1260 1080,1400 1120,1580"]} />

      <g className={label} strokeWidth="2">
        <text x="406" y="434" fontSize="32" fontWeight="700">Tscherms</text>
        <text x="551" y="811" fontSize="32" fontWeight="700">Lana</text>
        <text x="960" y="893" fontSize="32" fontWeight="700">Burgstall</text>
      </g>
      <text transform="translate(210 590) rotate(25)" fontSize="24" fontWeight="700" className="fill-[#242526] font-[Roboto,sans-serif]">
        Vigiljochbahn
      </text>

      <CameraPin x={157} y={373} />
      <CameraPin x={140} y={398} />
      <CameraPin x={273} y={397} />
      <CameraPin x={101} y={524} />
      <g fill="#000066">
        <circle cx="189" cy="406" r="25" />
        <circle cx="138" cy="594" r="25" />
        <circle cx="439" cy="491" r="25" />
      </g>
      <g className={label} strokeWidth="2" fontSize="48">
        <text x="202" y="394">Pit stop</text>
        <text x="453" y="479">Water</text>
        <text x="152" y="581">Wat</text>
      </g>
      <StarPin x={265} y={562} />
      <StarPin x={173} y={638} />
      <circle cx="452" cy="480" r="28" fill="#000" filter="url(#soft)" />
      <circle cx="451" cy="478" r="24" fill="url(#ring)" stroke="#222" strokeWidth="2" />
      <circle cx="451" cy="478" r="21" fill="#646464" />
      <circle cx="451" cy="479" r="16" fill="url(#core)" />
      <path d="M515 924.500h50M539.500 900v50" stroke="#660000" strokeWidth="3" />
    </svg>
  );
}

function FacebookIcon() {
  return (
    <svg viewBox="0 0 72 72" className="h-18 w-18 drop-shadow-sm" aria-hidden="true">
      <defs>
        <linearGradient id="fb" x1="0" y1="0" x2="1" y2="1">
          <stop offset="0" stopColor="#5069a4" />
          <stop offset="1" stopColor="#35579d" />
        </linearGradient>
      </defs>
      <rect x="8" y="6" width="56" height="56" rx="4" fill="url(#fb)" />
      <path d="M38 62V40h-7v-9h7v-5q0-12 12-12h6v8h-4q-5 0-5 4v5h9l-1 9h-8v22z" fill="#fff" />
    </svg>
  );
}

function GmailIcon() {
  return (
    <svg viewBox="0 0 72 72" className="h-18 w-18 drop-shadow-sm" aria-hidden="true">
      <path d="M7 9h58v50H7z" fill="#e3e3e3" />
      <path d="M7 9h58L36 32z" fill="#eee" />
      <path d="M11 57L36 37L61 57V18L36 40L11 18z" fill="#dcdcdc" />
      <path d="M11 57L36 37L61 57z" fill="#e8e8e8" />
      <path d="M3 16h8v43H6q-3 0-3-3z" fill="#dd4b3e" />
      <path d="M61 16h8v40q0 3-3 3h-5z" fill="#bc3525" />
      <path d="M3 13q0-4 4-4q2 0 3 1L36 29L62 10q1-1 3-1q4 0 4 4q0 2-2 4L36 39L5 17q-2-2-2-4z" fill="#e04a3f" />
    </svg>
  );
}

function TelegramIcon() {
  return (
    <svg viewBox="0 0 72 72" className="h-18 w-18" aria-hidden="true">
      <defs>
        <linearGradient id="tg" x1="0" y1="0" x2="0" y2="1">
          <stop offset="0" stopColor="#37b3e9" />
          <stop offset="1" stopColor="#1e90d2" />
        </linearGradient>
      </defs>
      <circle cx="36" cy="35" r="35" fill="#e4e4e4" />
      <circle cx="36" cy="34" r="35" fill="#fafafa" />
      <circle cx="36" cy="33" r="32" fill="url(#tg)" />
      <path d="M15 33L52 19q1 0 1 2L47 50q-1 2-3 1L35 44L29 50l-4-12l-10-3q-1-1 0-2z" fill="#fff" />
      <path d="M25 38L46 25L31 41l-2 9z" fill="#d3e2f0" />
      <path d="M29 50l2-9l4 3z" fill="#a9bfd6" />
    </svg>
  );
}

function KeepIcon() {
  return (
    <svg viewBox="0 0 72 72" className="h-18 w-18" aria-hidden="true">
      <rect x="7" y="7" width="58" height="58" rx="4" fill="#f5ba15" />
      <path d="M36 16a12 12 0 0 0-6 22v6h12v-6a12 12 0 0 0-6-22z" fill="#e5a61d" stroke="#f7f0dc" strokeWidth="3" />
      <path d="M30 50h12" stroke="#f7f0dc" strokeWidth="3" />
    </svg>
  );
}

const targets = [
  { name: "Facebook", icon: <FacebookIcon /> },
  { name: "Gmail", icon: <GmailIcon /> },
  { name: "Telegram", icon: <TelegramIcon /> },
  { name: "Keep", icon: <KeepIcon /> },
];

function StatusBar() {
  return (
    <header className="flex h-[75px] shrink-0 items-center bg-black pr-6 pl-[38px] text-[#e4e4e4]">
      <svg viewBox="0 0 32 46" className="h-[46px] w-8" fill="currentColor" aria-hidden="true">
        <path d="M3 1l4 6M29 1l-4 6" stroke="currentColor" strokeWidth="2" />
        <path d="M1 17C1 9 7 3 16 3s15 6 15 14c0 9-7 16-15 16S1 26 1 17z" />
        <circle cx="10" cy="14" r="2" fill="#000" />
        <circle cx="22" cy="14" r="2" fill="#000" />
        <path d="M14 36h4v10h-4z" />
      </svg>
      <div className="ml-auto flex items-center">
        <svg viewBox="0 0 30 43" className="h-[43px] w-[30px]" fill="currentColor" aria-hidden="true">
          <path fillRule="evenodd" d="M15 0C6 0 0 7 0 15c0 11 15 28 15 28s15-17 15-28C30 7 24 0 15 0zm0 9.500a5.500 5.500 0 1 1 0 11a5.500 5.500 0 0 1 0-11z" />
        </svg>
        <svg viewBox="0 0 28 43" className="ml-6 h-[43px] w-7" fill="none" stroke="currentColor" strokeWidth="3.500" aria-hidden="true">
          <path d="M2 8l22 22.500L15.500 39V4L24 12.500L2 35" />
        </svg>
        <svg viewBox="0 0 54 43" className="ml-[21px] h-[43px] w-[54px]" aria-hidden="true">
          <path d="M0 10Q27-10 54 10L27 43z" fill="#454545" />
          <path d="M7 18Q27 4 47 18L27 43z" fill="currentColor" />
        </svg>
        <svg viewBox="0 0 43 43" className="ml-[5px] h-[43px] w-[43px]" fill="currentColor" aria-hidden="true">
          <path d="M43 0v43H0z" />
        </svg>
        <svg viewBox="0 0 29 44" className="ml-6 h-11 w-[29px]" aria-hidden="true">
          <path d="M0 5h7V0h15v5h7v20H0z" fill="#5a5a5a" />
          <path d="M0 25h29v19H0z" fill="#eee" />
          <path d="M10 11h13l-5 11h6L7 39l5-14H7z" fill="#000" />
        </svg>
        <time className="ml-6 text-[42px] leading-none font-medium">12:19</time>
      </div>
    </header>
  );
}

export default function App() {
  return (
    <div className="flex h-screen w-full flex-col overflow-hidden bg-black font-[Roboto,sans-serif]">
      <StatusBar />
      <main className="relative min-h-0 flex-1 overflow-hidden bg-[#656064]">
        <MapView />
        <button
          type="button"
          aria-label="Menu"
          className="absolute top-7 right-4 flex h-[148px] w-[148px] flex-col items-center justify-center gap-[18px] rounded-full border-2 border-[#5f6661] bg-[#243f2e]"
        >
          <span className="h-[25px] w-6 bg-[#666]" />
          <span className="h-[25px] w-6 bg-[#666]" />
          <span className="h-[25px] w-6 bg-[#666]" />
        </button>
        <button
          type="button"
          aria-label="Track details"
          className="absolute bottom-1 left-4 flex h-[148px] w-[148px] items-center justify-center rounded-full border-2 border-[#5f6661] bg-[#243f2e]"
        >
          <svg viewBox="0 0 78 90" className="h-[90px] w-[78px]" fill="none" stroke="#666b67" strokeWidth="2" aria-hidden="true">
            <rect x="1" y="1" width="76" height="88" rx="6" />
            <path d="M7 10h63M7 20h63M7 30h63M7 40h63M7 50h35M7 60h65M7 70h65M7 80h55" />
          </svg>
        </button>
      </main>
      <section aria-labelledby="share-title" className="h-[744px] shrink-0 overflow-hidden bg-white">
        <h1 id="share-title" className="flex h-[170px] items-center px-18 text-[54px] leading-none text-[#757575]">
          Share current position
        </h1>
        <ul>
          {targets.map((t) => (
            <li key={t.name}>
              <button type="button" className="flex h-42 w-full items-center gap-18 px-18 text-left text-[54px] leading-none text-[#212121]">
                {t.icon}
                {t.name}
              </button>
            </li>
          ))}
        </ul>
      </section>
      <nav className="flex h-36 shrink-0 items-center bg-black px-[90px] text-[#e4e4e4]">
        <button type="button" aria-label="Back" className="flex h-full flex-1 items-center justify-center">
          <svg viewBox="0 0 50 56" className="h-14 w-[50px]" fill="none" stroke="currentColor" strokeWidth="6" strokeLinejoin="round" aria-hidden="true">
            <path d="M46 4v48L4 28z" />
          </svg>
        </button>
        <button type="button" aria-label="Home" className="flex h-full flex-1 items-center justify-center">
          <span className="h-[52px] w-[52px] rounded-full border-6 border-current" />
        </button>
        <button type="button" aria-label="Recent apps" className="flex h-full flex-1 items-center justify-center">
          <span className="h-12 w-12 rounded-sm border-6 border-current" />
        </button>
      </nav>
    </div>
  );
}
